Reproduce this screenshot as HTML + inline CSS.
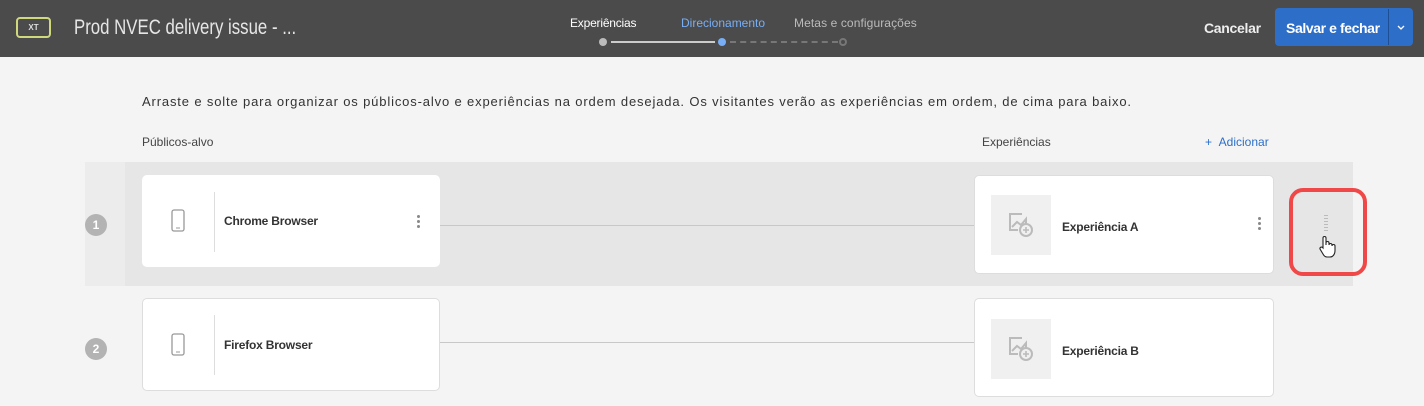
<!DOCTYPE html>
<html><head><meta charset="utf-8"><style>
*{box-sizing:border-box;margin:0;padding:0}
body{width:1424px;height:406px;overflow:hidden;background:#f4f4f4;font-family:"Liberation Sans",sans-serif;position:relative;color:#333}
.hdr{position:absolute;left:0;top:0;width:1424px;height:57px;background:#4b4b4b}
.abs{position:absolute;white-space:nowrap}
.card{position:absolute;background:#fff;border:1px solid #ddd;border-radius:5px}
.num{position:absolute;width:22px;height:22px;border-radius:50%;background:#b3b3b3;color:#fff;font-size:12px;font-weight:bold;text-align:center;line-height:22px}
.bold{font-weight:bold;font-size:12px;color:#333;letter-spacing:-0.2px}
.dots{position:absolute;width:3px}
.dots i{display:block;width:3px;height:3px;border-radius:50%;background:#888;margin-bottom:2px}
.line{position:absolute;height:1px;background:#c8c8c8}
.thumb{position:absolute;width:60px;height:60px;background:#f0f0f0}
</style></head><body>
<div class="hdr">
 <div class="abs" style="left:16px;top:17px;width:35px;height:21px;border:2px solid #cfd87a;border-radius:4px;color:#ddd;font-size:8px;font-weight:bold;text-align:center;line-height:17px">XT</div>
 <div class="abs" style="left:74px;top:16px;color:#e6e6e6;font-size:21px;transform:scaleX(0.8);transform-origin:left">Prod NVEC delivery issue - ...</div>
 <div class="abs" style="left:570px;top:16px;color:#fff;font-size:12px;letter-spacing:-0.2px">Experiências</div>
 <div class="abs" style="left:681px;top:16px;color:#78aef5;font-size:12px">Direcionamento</div>
 <div class="abs" style="left:794px;top:16px;color:#bbb;font-size:12px;letter-spacing:0.1px">Metas e configurações</div>
 <div class="abs" style="left:599px;top:38px;width:8px;height:8px;border-radius:50%;background:#bbb"></div>
 <div class="abs" style="left:611px;top:41px;width:104px;height:2px;background:#ccc"></div>
 <div class="abs" style="left:718px;top:38px;width:8px;height:8px;border-radius:50%;background:#78aef5"></div>
 <div class="abs" style="left:730px;top:41px;width:108px;height:0;border-top:2px dashed #777"></div>
 <div class="abs" style="left:839px;top:38px;width:8px;height:8px;border-radius:50%;border:2px solid #777"></div>
 <div class="abs" style="left:1204px;top:20px;color:#eee;font-size:14px;font-weight:bold;letter-spacing:-0.3px">Cancelar</div>
 <div class="abs" style="left:1275px;top:8px;width:138px;height:38px;background:#2d6fc8;border-radius:4px"></div>
 <div class="abs" style="left:1388px;top:9px;width:1px;height:36px;background:#1e4f94"></div>
 <div class="abs" style="left:1286px;top:20px;color:#fff;font-size:14px;font-weight:bold;letter-spacing:-0.4px">Salvar e fechar</div>
 <svg class="abs" style="left:1397px;top:25px" width="8" height="6"><path d="M1 1l3 3 3-3" fill="none" stroke="#fff" stroke-width="1.3"/></svg>
</div>
<div class="abs" style="left:142px;top:94px;font-size:13px;letter-spacing:0.85px;color:#333">Arraste e solte para organizar os públicos-alvo e experiências na ordem desejada. Os visitantes verão as experiências em ordem, de cima para baixo.</div>
<div class="abs" style="left:142px;top:135px;font-size:12px;color:#444">Públicos-alvo</div>
<div class="abs" style="left:982px;top:135px;font-size:12px;color:#444">Experiências</div>
<div class="abs" style="left:1205px;top:135px;font-size:12px;color:#2d6fc8">+&nbsp;&nbsp;Adicionar</div>

<div class="abs" style="left:85px;top:162px;width:40px;height:124px;background:#ececec"></div>
<div class="abs" style="left:125px;top:162px;width:1228px;height:124px;background:#e6e6e6"></div>
<div class="num" style="left:85px;top:214px">1</div>
<div class="num" style="left:85px;top:338px">2</div>

<div class="line" style="left:440px;top:225px;width:534px"></div>
<div class="line" style="left:440px;top:342px;width:534px"></div>

<div class="card" style="left:142px;top:175px;width:298px;height:92px;border:none"></div>
<svg class="abs" style="left:171px;top:209px" width="14" height="24"><rect x="1" y="1" width="12" height="21" rx="2" fill="none" stroke="#999" stroke-width="1.3"/><line x1="5" y1="19" x2="9" y2="19" stroke="#999"/></svg>
<div class="abs" style="left:214px;top:192px;width:1px;height:60px;background:#ddd"></div>
<div class="abs bold" style="left:224px;top:214px">Chrome Browser</div>
<div class="dots" style="left:417px;top:215px"><i></i><i></i><i></i></div>

<div class="card" style="left:974px;top:175px;width:300px;height:99px"></div>
<div class="thumb" style="left:991px;top:195px"></div>
<svg class="abs" style="left:1008px;top:212px" width="26" height="26"><path d="M14 2H2v16h8" fill="none" stroke="#bbb" stroke-width="2"/><path d="M4 15l5-5 4 3 5-6v5" fill="none" stroke="#bbb" stroke-width="2"/><circle cx="18" cy="18" r="6" fill="none" stroke="#bbb" stroke-width="2"/><path d="M18 15v6M15 18h6" stroke="#bbb" stroke-width="1.6"/></svg>
<div class="abs bold" style="left:1062px;top:220px">Experiência A</div>
<div class="dots" style="left:1258px;top:217px"><i></i><i></i><i></i></div>

<div class="abs" style="left:1289px;top:188px;width:78px;height:88px;border:4px solid #f04848;border-radius:14px"></div>
<div class="abs" style="left:1324px;top:215px;width:4px;height:16px;background:repeating-linear-gradient(#bbb 0 1px,transparent 1px 3px)"></div>
<svg class="abs" style="left:1318px;top:235px" width="18" height="24"><path d="M5 13V3a1.5 1.5 0 0 1 3 0v7V8a1.5 1.5 0 0 1 3 0v2a1.5 1.5 0 0 1 3 0v1a1.5 1.5 0 0 1 3 0v5c0 3-2 6-5 6H9c-2 0-3-1-4-3l-3-5a1.5 1.5 0 0 1 2.5-1.5z" fill="#fff" stroke="#222" stroke-width="1.1"/></svg>

<div class="card" style="left:142px;top:298px;width:298px;height:93px"></div>
<svg class="abs" style="left:171px;top:333px" width="14" height="24"><rect x="1" y="1" width="12" height="21" rx="2" fill="none" stroke="#999" stroke-width="1.3"/><line x1="5" y1="19" x2="9" y2="19" stroke="#999"/></svg>
<div class="abs" style="left:214px;top:315px;width:1px;height:60px;background:#ddd"></div>
<div class="abs bold" style="left:224px;top:338px">Firefox Browser</div>

<div class="card" style="left:974px;top:298px;width:300px;height:99px"></div>
<div class="thumb" style="left:991px;top:319px"></div>
<svg class="abs" style="left:1008px;top:336px" width="26" height="26"><path d="M14 2H2v16h8" fill="none" stroke="#bbb" stroke-width="2"/><path d="M4 15l5-5 4 3 5-6v5" fill="none" stroke="#bbb" stroke-width="2"/><circle cx="18" cy="18" r="6" fill="none" stroke="#bbb" stroke-width="2"/><path d="M18 15v6M15 18h6" stroke="#bbb" stroke-width="1.6"/></svg>
<div class="abs bold" style="left:1062px;top:344px">Experiência B</div>
</body></html>
